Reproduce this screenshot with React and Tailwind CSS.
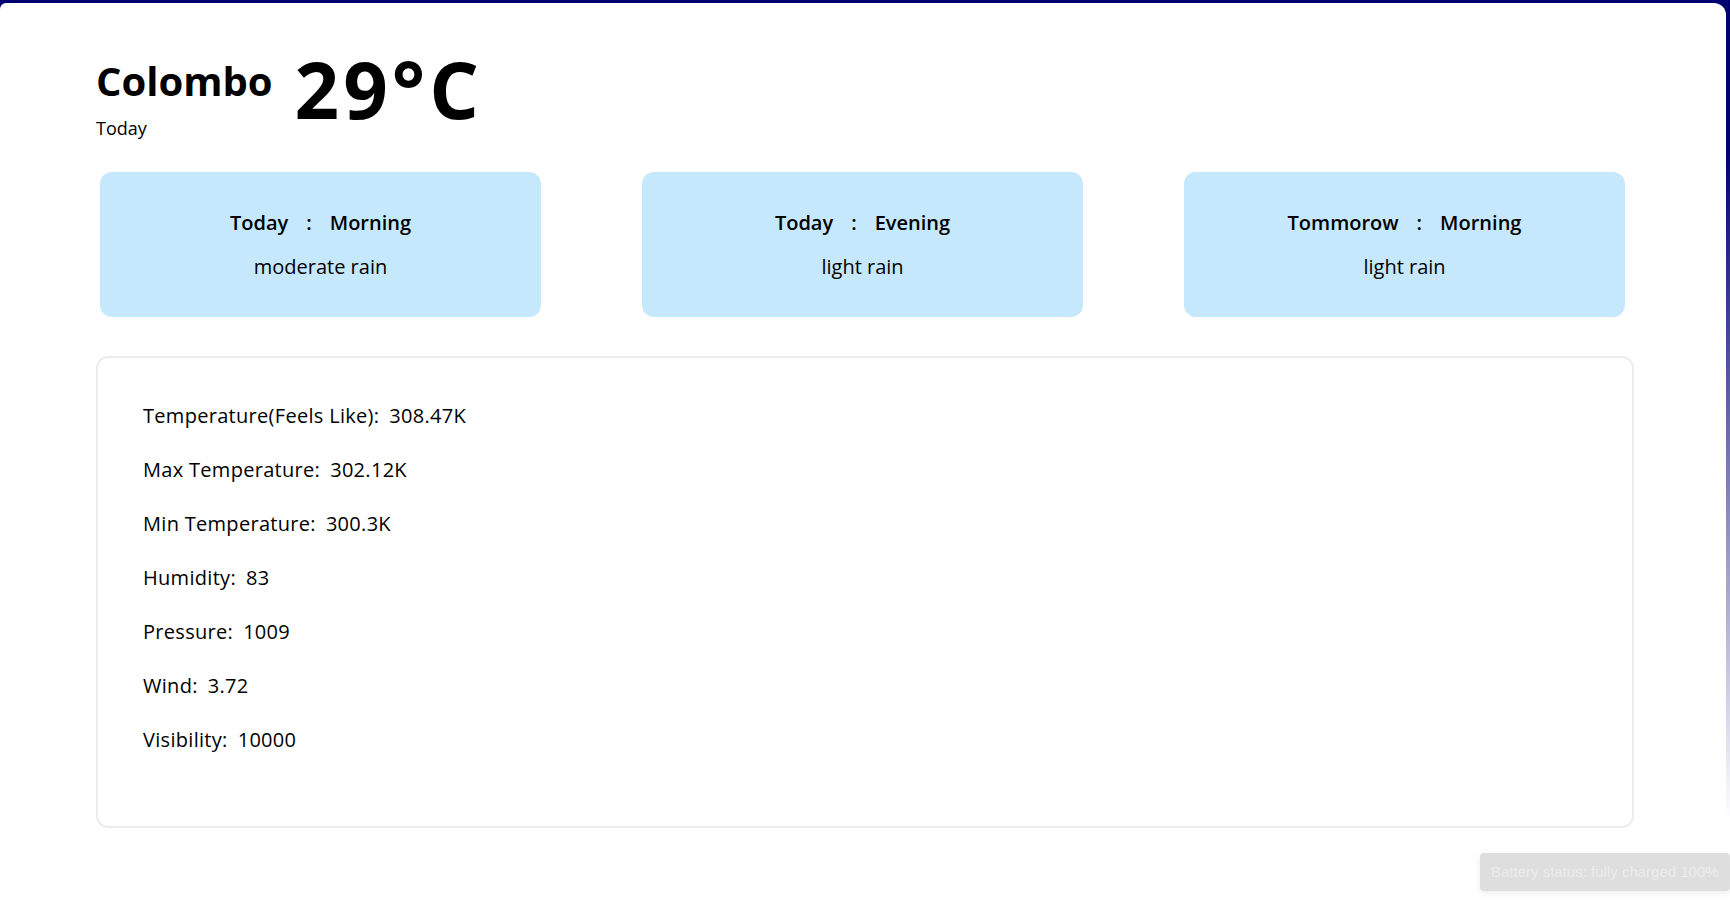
const forecasts = [
  { day: "Today", time: "Morning", desc: "moderate rain" },
  { day: "Today", time: "Evening", desc: "light rain" },
  { day: "Tommorow", time: "Morning", desc: "light rain" },
];

const details = [
  ["Temperature(Feels Like):", "308.47K"],
  ["Max Temperature:", "302.12K"],
  ["Min Temperature:", "300.3K"],
  ["Humidity:", "83"],
  ["Pressure:", "1009"],
  ["Wind:", "3.72"],
  ["Visibility:", "10000"],
];

function ForecastCard({ day, time, desc }) {
  return (
    <div className="flex h-[145px] flex-col items-center justify-center gap-[14px] rounded-xl bg-[#c6e8fd] text-[20px] text-black">
      <div className="flex items-center gap-[18px] font-semibold">
        <span>{day}</span>
        <span>:</span>
        <span>{time}</span>
      </div>
      <p>{desc}</p>
    </div>
  );
}

export default function App() {
  return (
    <div
      className="relative h-screen w-full bg-[linear-gradient(to_bottom,#000070_0px,#000070_150px,#ffffff_820px)] pt-[3px] pr-[4px]"
      style={{ fontFamily: '"Open Sans", "Noto Sans", sans-serif' }}
    >
      <div className="h-full rounded-tl-[6px] rounded-tr-[12px] bg-white pt-[50px] pr-[92px] pl-[96px]">
        {/* header */}
        <div className="flex items-start gap-[22px]">
          <div className="flex flex-col">
            <h1 className="text-[40px] leading-[56px] font-bold text-black">Colombo</h1>
            <p className="mt-[6px] text-[18px] leading-[27px] text-black">Today</p>
          </div>
          <h2 className="-mt-[6px] text-[78px] leading-[84px] font-bold tracking-[4px] text-black">29°C</h2>
        </div>

        {/* forecast cards */}
        <div className="mt-[30px] grid grid-cols-3 gap-[101px] pr-[9px] pl-[4px]">
          {forecasts.map((f, i) => (
            <ForecastCard key={i} {...f} />
          ))}
        </div>

        {/* details */}
        <div className="mt-[39px] flex h-[472px] flex-col gap-[26px] rounded-xl border-2 border-[#ececec] px-[45px] pt-[44px] text-[20px] leading-[28px] tracking-[0.3px] text-black">
          {details.map(([label, value]) => (
            <p key={label}>
              {label}
              <span className="ml-[10px]">{value}</span>
            </p>
          ))}
        </div>
      </div>

      {/* system toast */}
      <div
        className="absolute right-0 bottom-[11px] flex h-[38px] w-[250px] items-center rounded-[4px] bg-[#dedede] pl-[11px] text-[15px] whitespace-nowrap text-[#ececec] shadow-[0_2px_6px_rgba(0,0,0,0.08)]"
        style={{ fontFamily: '"Liberation Sans", sans-serif' }}
      >
        Battery status: fully charged 100%
      </div>
    </div>
  );
}
